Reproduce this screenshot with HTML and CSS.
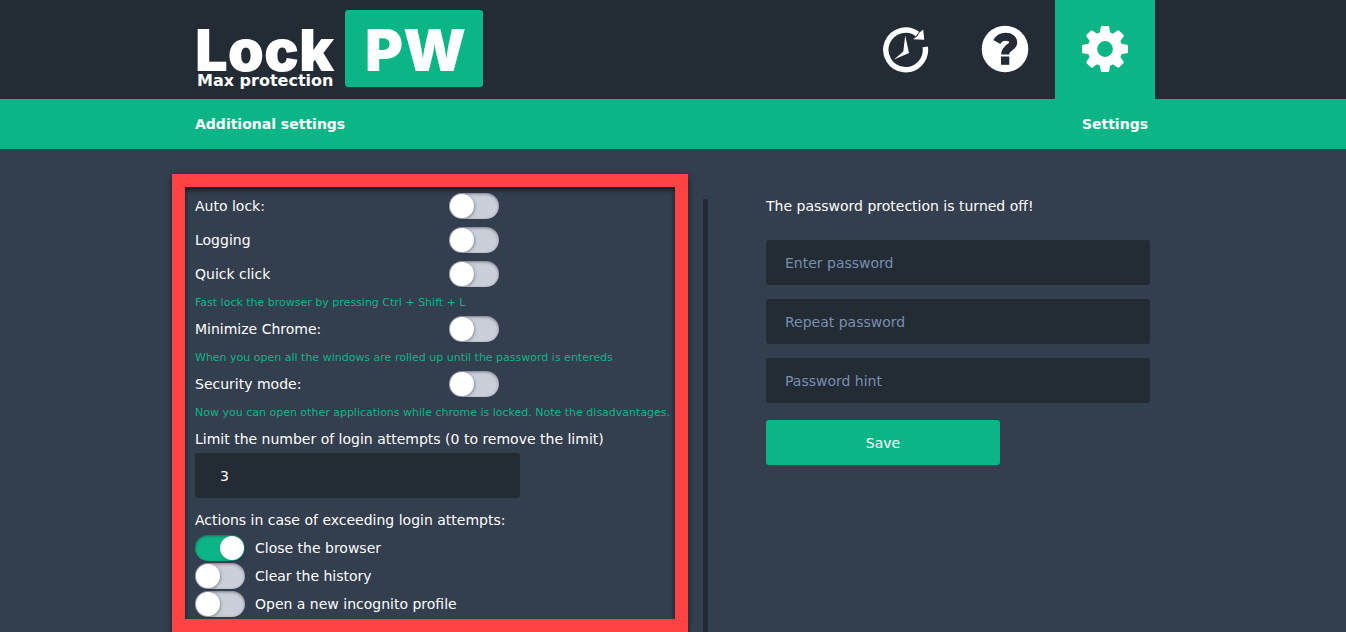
FILE: index.html
```html
<!DOCTYPE html>
<html lang="en">
<head>
  <meta charset="UTF-8" />
  <meta name="viewport" content="width=device-width, initial-scale=1.0"/>
  <title>LockPW - Settings</title>
  <link rel="stylesheet" href="styles.css">
</head>
<body>
  <header class="header">
    <div class="container header-inner">
      <a href="#" class="logo">
        <span class="logo-text">
          <span class="logo-name">Lock</span>
          <span class="logo-slogan">Max protection</span>
        </span>
        <span class="logo-box">PW</span>
      </a>
      <nav class="tabs">
        <a href="#history" class="tab" aria-label="History">
          <svg width="48" height="48" viewBox="0 0 48 48">
            <path d="M36.5 9A19.8 19.8 0 1 0 44.2 21.8" fill="none" stroke="#fff" stroke-width="5.4"/>
            <path d="M42.2 4.5L43.2 14.8L32 14.2L36.5 11L38 8Z" fill="#fff"/>
            <path d="M24.2 10.5L28 28L13 34.5L22.3 26.5Z" fill="#fff"/>
          </svg>
        </a>
        <a href="#help" class="tab" aria-label="Help">
          <svg width="48" height="48" viewBox="0 0 48 48">
            <circle cx="24" cy="24" r="23.3" fill="#fff"/>
            <path d="M15.8 17C18 13.2 21 11.8 24.8 11.8C29.4 11.8 32.2 14 32.2 17.4C32.2 22.6 24.3 22 24.2 29.5" fill="none" stroke="#232b35" stroke-width="8"/>
            <rect x="20" y="31.5" width="8.3" height="8.3" fill="#232b35"/>
          </svg>
        </a>
        <a href="#settings" class="tab active" aria-label="Settings">
          <svg width="48" height="48" viewBox="0 0 48 48" fill="#fff">
            <defs>
              <path id="tooth" d="M18.6 9L19.8 2Q20 1 21.1 1H26.9Q28 1 28.2 2L29.4 9Z"/>
            </defs>
            <use href="#tooth"/>
            <use href="#tooth" transform="rotate(45 24 24)"/>
            <use href="#tooth" transform="rotate(90 24 24)"/>
            <use href="#tooth" transform="rotate(135 24 24)"/>
            <use href="#tooth" transform="rotate(180 24 24)"/>
            <use href="#tooth" transform="rotate(225 24 24)"/>
            <use href="#tooth" transform="rotate(270 24 24)"/>
            <use href="#tooth" transform="rotate(315 24 24)"/>
            <circle cx="24" cy="24" r="12.6" fill="none" stroke="#fff" stroke-width="9.4"/>
          </svg>
        </a>
      </nav>
    </div>
  </header>

  <div class="title-bar">
    <div class="container title-inner">
      <span>Additional settings</span>
      <span>Settings</span>
    </div>
  </div>

  <main class="container main">
    <section class="options">
      <div class="row">
        <label for="auto-lock">Auto lock:</label>
        <input type="checkbox" class="toggle" id="auto-lock">
      </div>
      <div class="row">
        <label for="logging">Logging</label>
        <input type="checkbox" class="toggle" id="logging">
      </div>
      <div class="row">
        <label for="quick-click">Quick click</label>
        <input type="checkbox" class="toggle" id="quick-click">
      </div>
      <p class="hint">Fast lock the browser by pressing Ctrl + Shift + L</p>
      <div class="row">
        <label for="minimize">Minimize Chrome:</label>
        <input type="checkbox" class="toggle" id="minimize">
      </div>
      <p class="hint">When you open all the windows are rolled up until the password is entereds</p>
      <div class="row">
        <label for="security">Security mode:</label>
        <input type="checkbox" class="toggle" id="security">
      </div>
      <p class="hint">Now you can open other applications while chrome is locked. Note the disadvantages.</p>

      <label for="attempts" class="caption">Limit the number of login attempts (0 to remove the limit)</label>
      <input type="text" class="field attempts" id="attempts" value="3">

      <p class="caption actions">Actions in case of exceeding login attempts:</p>
      <div class="action">
        <input type="checkbox" class="toggle" id="close-browser" checked>
        <label for="close-browser">Close the browser</label>
      </div>
      <div class="action">
        <input type="checkbox" class="toggle" id="clear-history">
        <label for="clear-history">Clear the history</label>
      </div>
      <div class="action">
        <input type="checkbox" class="toggle" id="incognito">
        <label for="incognito">Open a new incognito profile</label>
      </div>
    </section>

    <div class="divider"></div>

    <form class="password">
      <p class="status">The password protection is turned off!</p>
      <input type="password" class="field" placeholder="Enter password" aria-label="Enter password">
      <input type="password" class="field" placeholder="Repeat password" aria-label="Repeat password">
      <input type="text" class="field" placeholder="Password hint" aria-label="Password hint">
      <button type="button" class="save">Save</button>
    </form>
  </main>
</body>
</html>
```
FILE: styles.css
```css
* {
  box-sizing: border-box;
}
body {
  margin: 0;
  padding-left: 4px;
  min-height: 100vh;
  display: flex;
  flex-direction: column;
  background-color: #333e4f;
  color: #fff;
  font-family: Verdana, "DejaVu Sans", sans-serif;
  font-size: 14px;
}
p {
  margin: 0;
}
.container {
  width: 100%;
  max-width: 960px;
  margin: 0 auto;
}

/* Header */
.header {
  margin-left: -4px;
  padding-left: 4px;
  background-color: #232b35;
}
.header-inner {
  display: flex;
  justify-content: space-between;
  height: 99px;
}
.logo {
  display: flex;
  align-items: center;
  padding-bottom: 2px;
  color: #fff;
  text-decoration: none;
  font-family: Inter, sans-serif;
  font-weight: 900;
}
.logo-text {
  width: 150px;
  padding-top: 20px;
}
.logo-name {
  display: block;
  font-size: 58px;
  line-height: 44px;
}
.logo-slogan {
  display: block;
  padding-left: 2px;
  font-family: Verdana, "DejaVu Sans", sans-serif;
  font-size: 16px;
  line-height: 17px;
  white-space: nowrap;
}
.logo-box {
  width: 138px;
  height: 77px;
  padding-left: 3px;
  border-radius: 3px;
  background-color: #0cb586;
  font-size: 58px;
  line-height: 80px;
  text-align: center;
}
.tabs {
  display: flex;
}
.tab {
  display: flex;
  align-items: center;
  justify-content: center;
  width: 100px;
  padding-bottom: 2px;
}
.tab.active {
  background-color: #0cb586;
}

/* Title bar */
.title-bar {
  margin-left: -4px;
  padding-left: 4px;
  background-color: #0cb586;
}
.title-inner {
  display: flex;
  justify-content: space-between;
  padding-right: 7px;
  line-height: 50px;
  font-weight: bold;
}

/* Content */
.main {
  display: flex;
  flex: 1;
  padding-top: 25px;
}
.options {
  flex: 0 1 516px;
  margin-left: -23px;
  padding: 2px 0 1px 10px;
  border: 13px solid #fd4344;
  box-shadow: 0 3px 6px rgba(0, 0, 0, 0.5), inset 0 3px 5px rgba(0, 0, 0, 0.6);
}
.row {
  display: flex;
  align-items: center;
  height: 34px;
}
.row label {
  width: 254px;
}
.hint {
  padding-top: 2px;
  color: #0db688;
  font-size: 11px;
  line-height: 19px;
  white-space: nowrap;
}
.caption {
  display: block;
  margin-top: 3px;
  line-height: 28px;
}
.actions {
  margin-top: 8px;
}
.action {
  display: flex;
  align-items: center;
  gap: 10px;
  height: 28px;
}
.divider {
  width: 5px;
  margin: 25px 58px 0 15px;
  background-color: #232b35;
}

/* Toggle switch */
.toggle {
  appearance: none;
  display: flex;
  flex: none;
  width: 50px;
  height: 26px;
  margin: 0;
  padding: 1px;
  border-radius: 13px;
  background-color: #cbcfd9;
  box-shadow: inset 0 1px 3px rgba(40, 30, 60, 0.5);
  cursor: pointer;
}
.toggle::before {
  content: "";
  width: 24px;
  height: 24px;
  border-radius: 50%;
  background-color: #fff;
  box-shadow: 1px 1px 3px rgba(0, 0, 0, 0.3);
}
.toggle:checked {
  justify-content: flex-end;
  background-color: #0cb586;
}

/* Text boxes */
.field {
  display: block;
  width: 100%;
  height: 45px;
  padding: 0 19px;
  border: 0;
  border-radius: 3px;
  background-color: #232b35;
  color: #fff;
  font: inherit;
}
.field::placeholder {
  color: #788fb0;
}
.attempts {
  width: 325px;
  padding: 0 25px;
}

/* Password form */
.password {
  flex: 0 1 384px;
  padding-top: 15px;
}
.password .field {
  margin-bottom: 14px;
}
.status {
  margin-bottom: 17px;
  line-height: 34px;
}
.save {
  width: 234px;
  height: 45px;
  margin-top: 3px;
  border: 0;
  border-radius: 3px;
  background-color: #0cb586;
  color: #fff;
  font: inherit;
  cursor: pointer;
}
```
